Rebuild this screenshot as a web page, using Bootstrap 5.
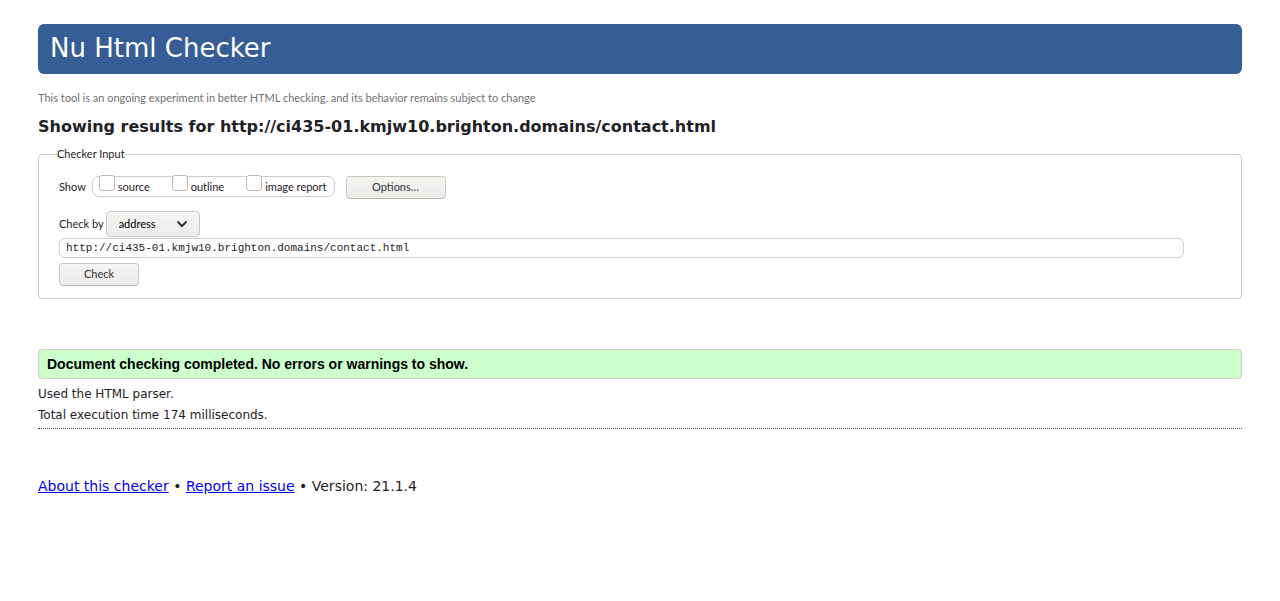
<!DOCTYPE html>
<html lang="en">
<head>
<meta charset="utf-8">
<meta name="viewport" content="width=device-width, initial-scale=1">
<title>Nu Html Checker</title>
<link href="https://cdn.jsdelivr.net/npm/bootstrap@5.3.0/dist/css/bootstrap.min.css" rel="stylesheet">
<style>
  body { font-family: "DejaVu Sans", sans-serif; font-size: 12px; line-height: 21px; color: #1f2126; background: #fff; }
  .page { padding: 24px 38px; }
  .banner { background: #365d95; border-radius: 6px; padding: 4px 12px 6px; }
  .banner h1 { font-size: 26px; line-height: 40px; color: #fff; font-weight: 400; }
  .ui-text { font-family: Lato, sans-serif; font-size: 11px; line-height: 16px; }
  .notice { color: #707070; }
  .results-title { font-size: 16px; line-height: 20px; font-weight: 700; margin: 11px 0 9px; }
  .inputs { border: 1px solid #ccc; border-radius: 4px; padding: 14px 57px 12px 20px; }
  .inputs legend { font-size: 11px; line-height: 16px; color: #1f2126; margin-left: -2px; }
  .show-row { gap: 6px; line-height: 21px; margin-bottom: 12px; }
  .show-options { border: 1px solid #ccc; border-radius: 7px; height: 21px; padding: 0 7px 0 6px; gap: 22px; }
  .show-options .form-check-input { width: 16px; height: 16px; border: 1px solid #bfb8b1; border-radius: 3px; margin: -7px 3px 0 0; }
  .gray-btn { font-size: 11px; line-height: 16px; color: #2e3436; border: 1px solid #cdc7c2; border-bottom-color: #bfb8b1; border-radius: 4px; background: linear-gradient(#f6f5f4, #edebe9); height: 23px; padding: 2px 0 3px; }
  .gray-btn:hover { border-color: #bfb8b1; background: #f6f5f4; }
  .btn-options { width: 100px; margin-left: 5px; }
  .btn-check-page { width: 80px; }
  .method-row { gap: 2px; }
  .method { width: 94px; height: 26px; padding: 0 12px 1px; font-size: 11px; line-height: 16px; color: #000; border: 1px solid #cdc7c2; border-radius: 4px;
    background: url("data:image/svg+xml,%3Csvg xmlns='http://www.w3.org/2000/svg' viewBox='0 0 12 8'%3E%3Cpath d='M1.5 1.5 6 6l4.500-4.500' fill='none' stroke='%232e3436' stroke-width='2'/%3E%3C/svg%3E") no-repeat right 11px center / 12px 8px, linear-gradient(#f6f5f4, #edebe9); }
  .address { font-family: "Liberation Mono", monospace; font-size: 11px; line-height: 16px; height: 20px; padding: 1px 6px; color: #1f2126; border: 1px solid #ccc; border-radius: 6px; margin: 1px 0 5px; }
  .success { font-family: "Liberation Sans", Arial, sans-serif; font-size: 14px; line-height: 20px; font-weight: 700; color: #000; background: #cfc; border: 1px solid #ccc; border-radius: 4px; padding: 4px 8px; margin-top: 50px; }
  .summary { border-bottom: 1px dotted #444; padding: 5px 0 2px; margin-bottom: 47px; }
  .site-footer { font-size: 14px; }
  .site-footer a { color: #00e; }
</style>
</head>
<body>
<div class="page container-fluid">
  <header class="banner"><h1 class="mb-0">Nu Html Checker</h1></header>
  <main>
    <p class="notice ui-text mt-3 mb-2">This tool is an ongoing experiment in better HTML checking, and its behavior remains subject to change</p>
    <h2 class="results-title">Showing results for http://ci435-01.kmjw10.brighton.domains/contact.html</h2>
    <form>
      <fieldset class="inputs ui-text">
        <legend class="float-none w-auto px-0 mb-0">Checker Input</legend>
        <div class="show-row d-flex align-items-start">
          <span>Show</span>
          <div class="show-options d-flex align-items-center">
            <div class="d-flex align-items-center"><input class="form-check-input" type="checkbox" id="source"><label for="source">source</label></div>
            <div class="d-flex align-items-center"><input class="form-check-input" type="checkbox" id="outline"><label for="outline">outline</label></div>
            <div class="d-flex align-items-center"><input class="form-check-input" type="checkbox" id="image"><label for="image">image report</label></div>
          </div>
          <button type="button" class="btn gray-btn btn-options">Options…</button>
        </div>
        <div class="method-row d-flex align-items-center">
          <label for="method">Check by</label>
          <select id="method" class="form-select method"><option>address</option><option>file upload</option><option>text input</option></select>
        </div>
        <input class="form-control address" type="url" aria-label="Address of page to check" value="http://ci435-01.kmjw10.brighton.domains/contact.html">
        <button type="submit" class="btn gray-btn btn-check-page">Check</button>
      </fieldset>
    </form>
    <p class="success mb-0">Document checking completed. No errors or warnings to show.</p>
    <div class="summary">
      <p class="mb-0">Used the HTML parser.</p>
      <p class="mb-0">Total execution time 174 milliseconds.</p>
    </div>
  </main>
  <footer class="site-footer"><a href="#">About this checker</a> • <a href="#">Report an issue</a> • Version: 21.1.4</footer>
</div>
<script src="https://cdn.jsdelivr.net/npm/bootstrap@5.3.0/dist/js/bootstrap.bundle.min.js"></script>
</body>
</html>
